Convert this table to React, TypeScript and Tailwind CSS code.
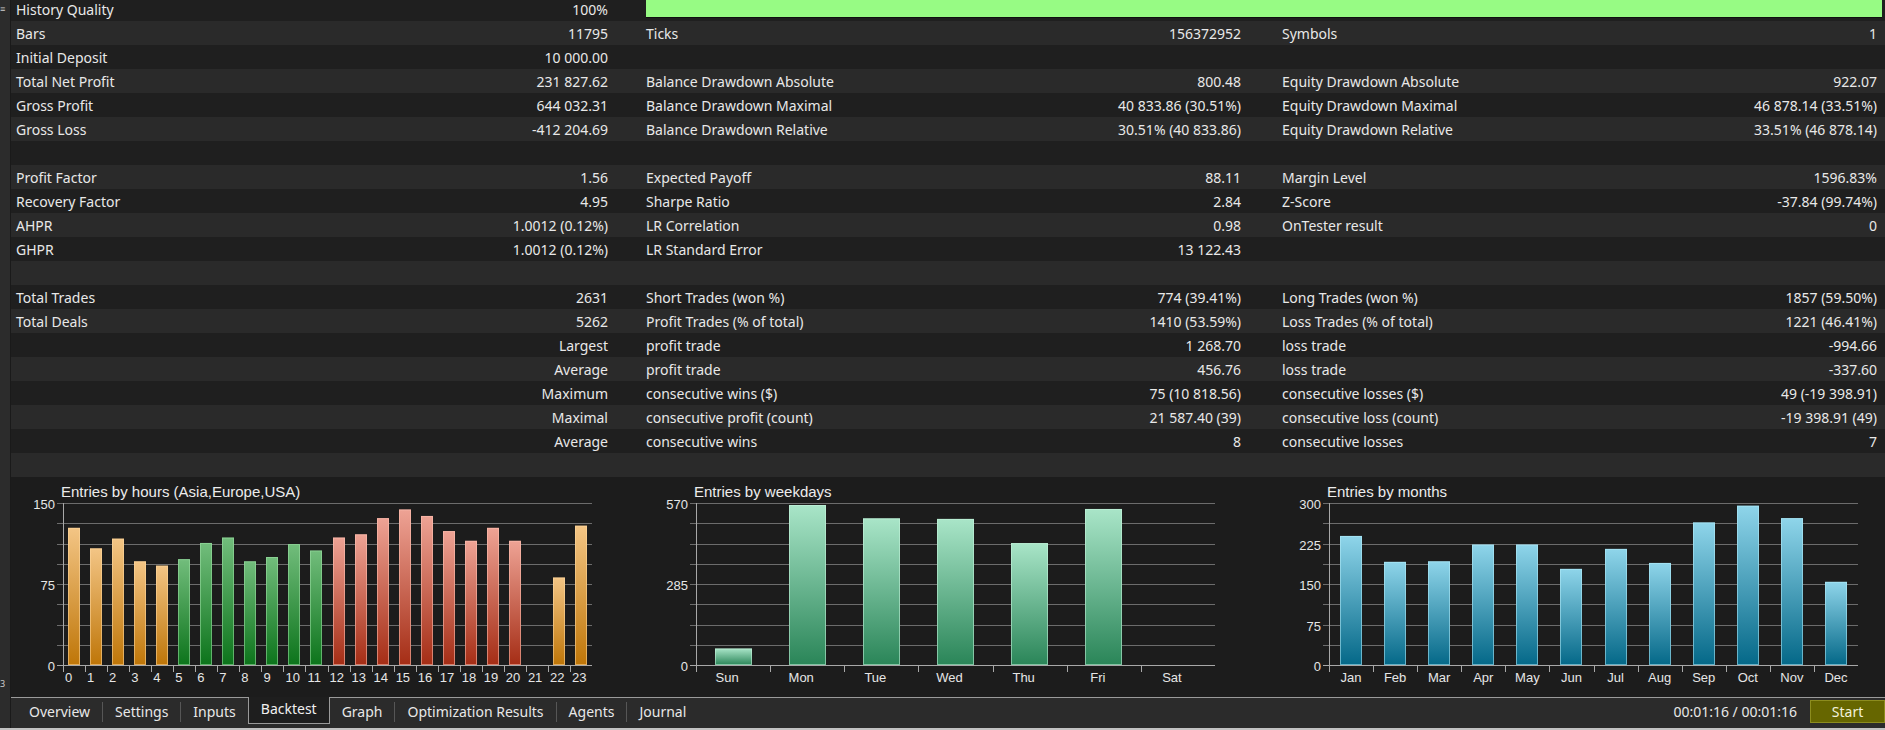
import React from "react";

type Row = [string, string, string, string, string, string];

const E: Row = ["", "", "", "", "", ""];

const rows: Row[] = [
  ["History Quality", "100%", "", "", "", ""],
  ["Bars", "11795", "Ticks", "156372952", "Symbols", "1"],
  ["Initial Deposit", "10 000.00", "", "", "", ""],
  ["Total Net Profit", "231 827.62", "Balance Drawdown Absolute", "800.48", "Equity Drawdown Absolute", "922.07"],
  ["Gross Profit", "644 032.31", "Balance Drawdown Maximal", "40 833.86 (30.51%)", "Equity Drawdown Maximal", "46 878.14 (33.51%)"],
  ["Gross Loss", "-412 204.69", "Balance Drawdown Relative", "30.51% (40 833.86)", "Equity Drawdown Relative", "33.51% (46 878.14)"],
  E,
  ["Profit Factor", "1.56", "Expected Payoff", "88.11", "Margin Level", "1596.83%"],
  ["Recovery Factor", "4.95", "Sharpe Ratio", "2.84", "Z-Score", "-37.84 (99.74%)"],
  ["AHPR", "1.0012 (0.12%)", "LR Correlation", "0.98", "OnTester result", "0"],
  ["GHPR", "1.0012 (0.12%)", "LR Standard Error", "13 122.43", "", ""],
  E,
  ["Total Trades", "2631", "Short Trades (won %)", "774 (39.41%)", "Long Trades (won %)", "1857 (59.50%)"],
  ["Total Deals", "5262", "Profit Trades (% of total)", "1410 (53.59%)", "Loss Trades (% of total)", "1221 (46.41%)"],
  ["", "Largest", "profit trade", "1 268.70", "loss trade", "-994.66"],
  ["", "Average", "profit trade", "456.76", "loss trade", "-337.60"],
  ["", "Maximum", "consecutive wins ($)", "75 (10 818.56)", "consecutive losses ($)", "49 (-19 398.91)"],
  ["", "Maximal", "consecutive profit (count)", "21 587.40 (39)", "consecutive loss (count)", "-19 398.91 (49)"],
  ["", "Average", "consecutive wins", "8", "consecutive losses", "7"],
  E,
];

type Grad = { id: string; top: string; bottom: string; edge: string };

type ChartProps = {
  width: number;
  plotLeft: number;
  plotWidth: number;
  title: string;
  max: number;
  yTicks: { idx: number; label: string }[];
  values: number[];
  labels: string[];
  barWidth: number;
  grads: Grad[];
  gradFor: (i: number) => string;
  labelMode: "start" | "center";
  labelDx: number;
  uid: string;
};

const PLOT_TOP = 26;
const PLOT_BOTTOM = 188;
const PLOT_H = PLOT_BOTTOM - PLOT_TOP;

function Chart(p: ChartProps) {
  const slot = p.plotWidth / p.values.length;
  const gridYs = Array.from({ length: 9 }, (_, i) => Math.round(PLOT_TOP + (PLOT_H * i) / 8) + 0.5);
  const right = p.plotLeft + p.plotWidth;
  return (
    <svg width={p.width} height={220} className="block shrink-0" style={{ fontFamily: '"Liberation Sans", Arial, sans-serif' }}>
      <defs>
        {p.grads.map((g) => (
          <linearGradient key={g.id} id={`${p.uid}-${g.id}`} x1="0" y1="0" x2="0" y2="1">
            <stop offset="0" stopColor={g.top} />
            <stop offset="1" stopColor={g.bottom} />
          </linearGradient>
        ))}
      </defs>
      <text x={p.plotLeft - 2} y={20} fill="#ececec" fontSize={15}>
        {p.title}
      </text>
      {gridYs.map((y, i) => (
        <line key={i} x1={p.plotLeft - 6} x2={right} y1={y} y2={y} stroke={i === 8 ? "#a8a8a8" : "#6c6c6c"} strokeWidth={1} />
      ))}
      <line x1={p.plotLeft + 0.5} x2={p.plotLeft + 0.5} y1={PLOT_TOP} y2={PLOT_BOTTOM + 7} stroke="#a8a8a8" />
      {p.values.map((_, i) =>
        i === 0 ? null : (
          <line
            key={i}
            x1={Math.round(p.plotLeft + slot * i) + 0.5}
            x2={Math.round(p.plotLeft + slot * i) + 0.5}
            y1={PLOT_BOTTOM}
            y2={PLOT_BOTTOM + 7}
            stroke="#a8a8a8"
          />
        )
      )}
      {p.yTicks.map((t) => (
        <text key={t.idx} x={p.plotLeft - 8} y={gridYs[t.idx] + 5} fill="#e6e6e6" fontSize={13} textAnchor="end">
          {t.label}
        </text>
      ))}
      {p.values.map((v, i) => {
        if (v <= 0) return null;
        const h = (v / p.max) * PLOT_H;
        const x = Math.round(p.plotLeft + slot * i + (slot - p.barWidth) / 2);
        const g = p.grads.find((gg) => gg.id === p.gradFor(i))!;
        return (
          <g key={i}>
            <rect x={x} y={PLOT_BOTTOM - h} width={p.barWidth} height={h} fill={`url(#${p.uid}-${g.id})`} />
            <rect x={x + 0.5} y={PLOT_BOTTOM - h + 0.5} width={p.barWidth - 1} height={h - 1} fill="none" stroke={g.edge} strokeOpacity={0.55} />
          </g>
        );
      })}
      {p.labels.map((l, i) => {
        const x = p.labelMode === "start" ? p.plotLeft + slot * i + p.labelDx : p.plotLeft + slot * i + slot / 2 + p.labelDx;
        return (
          <text key={i} x={x} y={205} fill="#e6e6e6" fontSize={13} textAnchor={p.labelMode === "start" ? "start" : "middle"}>
            {l}
          </text>
        );
      })}
    </svg>
  );
}

const hours = [127, 108, 117, 96, 92, 98, 113, 118, 96, 100, 112, 106, 118, 121, 136, 144, 138, 124, 115, 127, 115, 0, 81, 129];
const weekdays = [58, 563, 516, 514, 429, 549, 0];
const months = [239, 191, 192, 223, 223, 178, 215, 189, 264, 295, 272, 154];

function Tab({ label }: { label: string }) {
  return <div className="px-[12px] text-[14px] leading-none text-[#e8e8e8]">{label}</div>;
}

function Sep() {
  return <div className="w-px h-[20px] bg-[#565656]" />;
}

export default function App() {
  return (
    <div
      className="w-[1885px] h-[730px] overflow-hidden bg-[#1e1e1e] flex flex-col"
      style={{ fontFamily: '"Segoe UI", "Noto Sans", "Open Sans", sans-serif' }}
    >
      <div className="flex flex-1 min-h-0">
        {/* left strip */}
        <div className="w-[11px] shrink-0 bg-[#2c2c2c] border-r border-[#1a1a1a] flex flex-col items-start">
          <span className="mt-[4px] text-[9px] leading-none text-[#cfcfcf]">≡</span>
          <span className="mt-[666px] text-[9px] leading-none text-[#cfcfcf]">3</span>
        </div>

        {/* main column */}
        <div className="flex-1 flex flex-col min-w-0">
          <div className="mt-[-3px] flex flex-col text-[14px] text-[#e8e8e8]">
            {rows.map((r, i) => (
              <div key={i} className={`flex h-[24px] items-center ${i % 2 === 0 ? "bg-[#1f1f1f]" : "bg-[#2a2a2a]"}`}>
                <div className="w-[619px] shrink-0 flex items-center justify-between pl-[5px] pr-[22px]">
                  <span>{r[0]}</span>
                  <span>{r[1]}</span>
                </div>
                {i === 0 ? (
                  <div className="flex-1 self-stretch pt-[3px] pl-[16px] pr-[3px]">
                    <div className="h-[18px] bg-[#97fb84] border-b border-[#101010]" />
                  </div>
                ) : (
                  <>
                    <div className="w-[630px] shrink-0 flex items-center justify-between pl-[16px] pr-[19px]">
                      <span>{r[2]}</span>
                      <span>{r[3]}</span>
                    </div>
                    <div className="flex-1 flex items-center justify-between pl-[22px] pr-[8px]">
                      <span>{r[4]}</span>
                      <span>{r[5]}</span>
                    </div>
                  </>
                )}
              </div>
            ))}
          </div>

          {/* charts */}
          <div className="h-[220px] shrink-0 bg-[#1c1c1c] flex">
            <Chart
              uid="h"
              width={619}
              plotLeft={52}
              plotWidth={529}
              title="Entries by hours (Asia,Europe,USA)"
              max={150}
              yTicks={[
                { idx: 0, label: "150" },
                { idx: 4, label: "75" },
                { idx: 8, label: "0" },
              ]}
              values={hours}
              labels={hours.map((_, i) => String(i))}
              barWidth={12}
              grads={[
                { id: "o", top: "#f3c585", bottom: "#bf7608", edge: "#ffd9a0" },
                { id: "g", top: "#72bd7c", bottom: "#0c741b", edge: "#9fe0a6" },
                { id: "r", top: "#eea395", bottom: "#a52d15", edge: "#ffc2b5" },
              ]}
              gradFor={(i) => (i >= 5 && i <= 11 ? "g" : i >= 12 && i <= 20 ? "r" : "o")}
              labelMode="start"
              labelDx={2}
            />
            <Chart
              uid="w"
              width={630}
              plotLeft={66}
              plotWidth={519}
              title="Entries by weekdays"
              max={570}
              yTicks={[
                { idx: 0, label: "570" },
                { idx: 4, label: "285" },
                { idx: 8, label: "0" },
              ]}
              values={weekdays}
              labels={["Sun", "Mon", "Tue", "Wed", "Thu", "Fri", "Sat"]}
              barWidth={37}
              grads={[{ id: "g", top: "#a9e5c8", bottom: "#2a8558", edge: "#c8f5de" }]}
              gradFor={() => "g"}
              labelMode="center"
              labelDx={-6}
            />
            <Chart
              uid="m"
              width={625}
              plotLeft={69}
              plotWidth={529}
              title="Entries by months"
              max={300}
              yTicks={[
                { idx: 0, label: "300" },
                { idx: 2, label: "225" },
                { idx: 4, label: "150" },
                { idx: 6, label: "75" },
                { idx: 8, label: "0" },
              ]}
              values={months}
              labels={["Jan", "Feb", "Mar", "Apr", "May", "Jun", "Jul", "Aug", "Sep", "Oct", "Nov", "Dec"]}
              barWidth={22}
              grads={[{ id: "b", top: "#8fd5ea", bottom: "#046888", edge: "#b5ecfa" }]}
              gradFor={() => "b"}
              labelMode="center"
              labelDx={0}
            />
          </div>

          {/* tab bar */}
          <div className="h-[31px] shrink-0 flex items-center bg-[#2b2b2b] border-t border-[#9a9a9a] pl-[6px] pb-[3px]">
            <Tab label="Overview" />
            <Sep />
            <Tab label="Settings" />
            <Sep />
            <Tab label="Inputs" />
            <div className="self-start -mt-px h-[27px] flex items-center pb-[2px] px-[12px] bg-[#1e1e1e] border-x border-b border-[#9a9a9a] text-[14px] leading-none text-[#f0f0f0]">
              Backtest
            </div>
            <Tab label="Graph" />
            <Sep />
            <Tab label="Optimization Results" />
            <Sep />
            <Tab label="Agents" />
            <Sep />
            <Tab label="Journal" />
            <div className="ml-auto flex items-center gap-[13px] self-stretch">
              <span className="text-[14px] leading-none text-[#e8e8e8]">00:01:16 / 00:01:16</span>
              <div className="self-start mt-[2px] w-[75px] h-[23px] flex items-center justify-center bg-[#666600] border border-[#8c8c1e] text-[14px] leading-none text-[#f2f2dc]">
                Start
              </div>
            </div>
          </div>
        </div>
      </div>
      <div className="h-[2px] shrink-0 bg-[#c2c2c2]" />
    </div>
  );
}
